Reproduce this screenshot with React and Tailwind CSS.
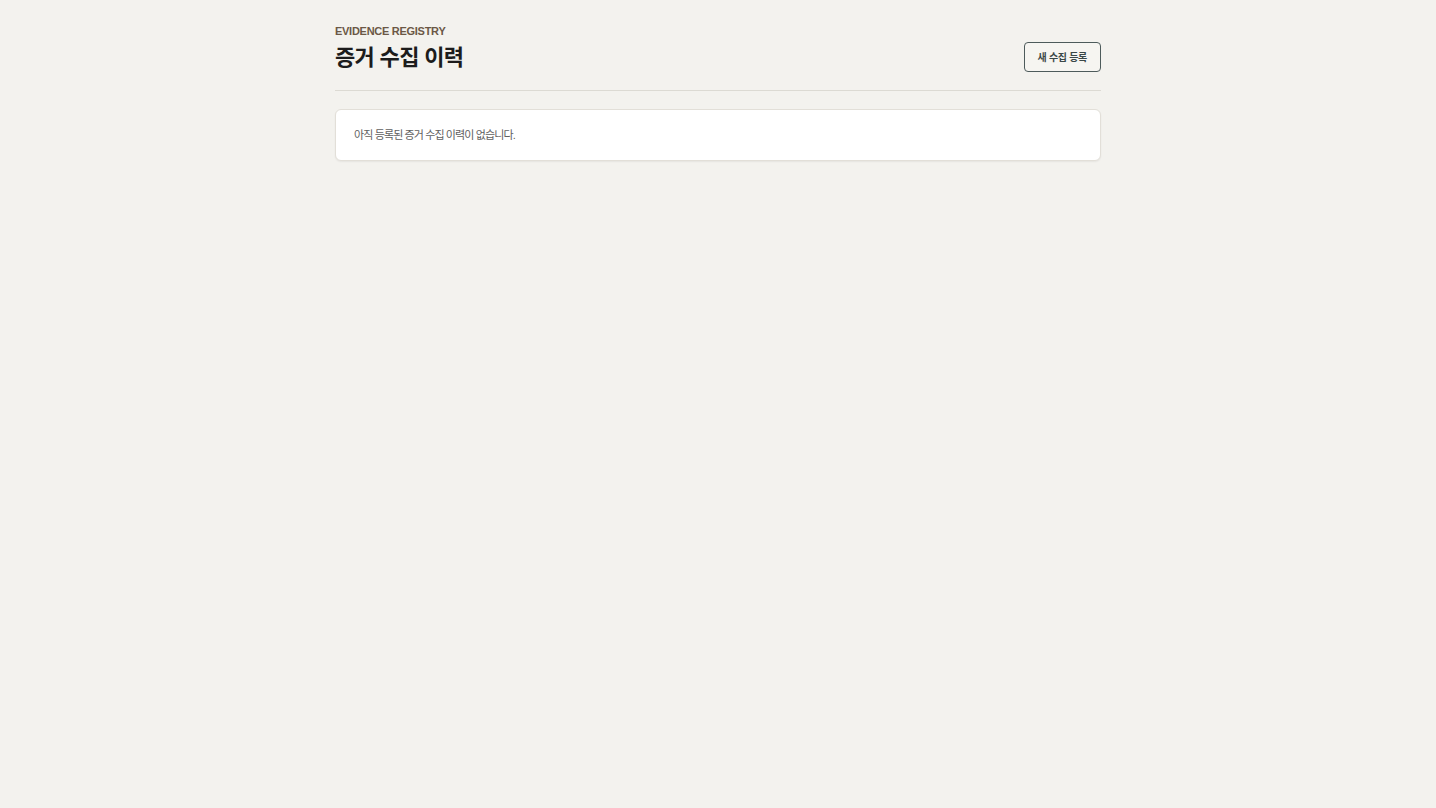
import React from 'react';

const font = { fontFamily: '"Liberation Sans", "Noto Sans CJK KR", sans-serif' };

const EvidenceRegistry = () => {
  const records = [];

  return (
    <div className="min-h-screen bg-[#f3f2ee] text-[#1f1f1f]" style={font}>
      <div className="w-[766px] mx-auto pt-[25px]">

        {/* Header */}
        <div className="flex items-end justify-between pb-[18px] border-b border-[#dcdad3]">
          <div>
            <div className="text-[11px] font-bold text-[#6b5846] tracking-[-0.025em] leading-[13px]">EVIDENCE REGISTRY</div>
            <h1 className="mt-[6px] text-[22px] font-bold leading-[28px] tracking-[-0.03em] text-[#1c1c1c]">증거 수집 이력</h1>
          </div>
          <button className="h-[30px] px-[13px] border border-[#4d5b5b] rounded-[4px] bg-[#f6f5f1] text-[10px] font-bold text-[#3b4848] tracking-[-0.03em]">
            새 수집 등록
          </button>
        </div>

        {/* Records */}
        <div className="mt-[18px]">
          {records.length === 0 && (
            <div className="h-[52px] px-[18px] flex items-center bg-white border border-[#e2dfd8] rounded-[6px] shadow-[0_1px_2px_rgba(0,0,0,0.06)]">
              <p className="text-[11px] text-[#606060] tracking-[-0.08em]">아직 등록된 증거 수집 이력이 없습니다.</p>
            </div>
          )}
        </div>

      </div>
    </div>
  );
};

export default EvidenceRegistry;
